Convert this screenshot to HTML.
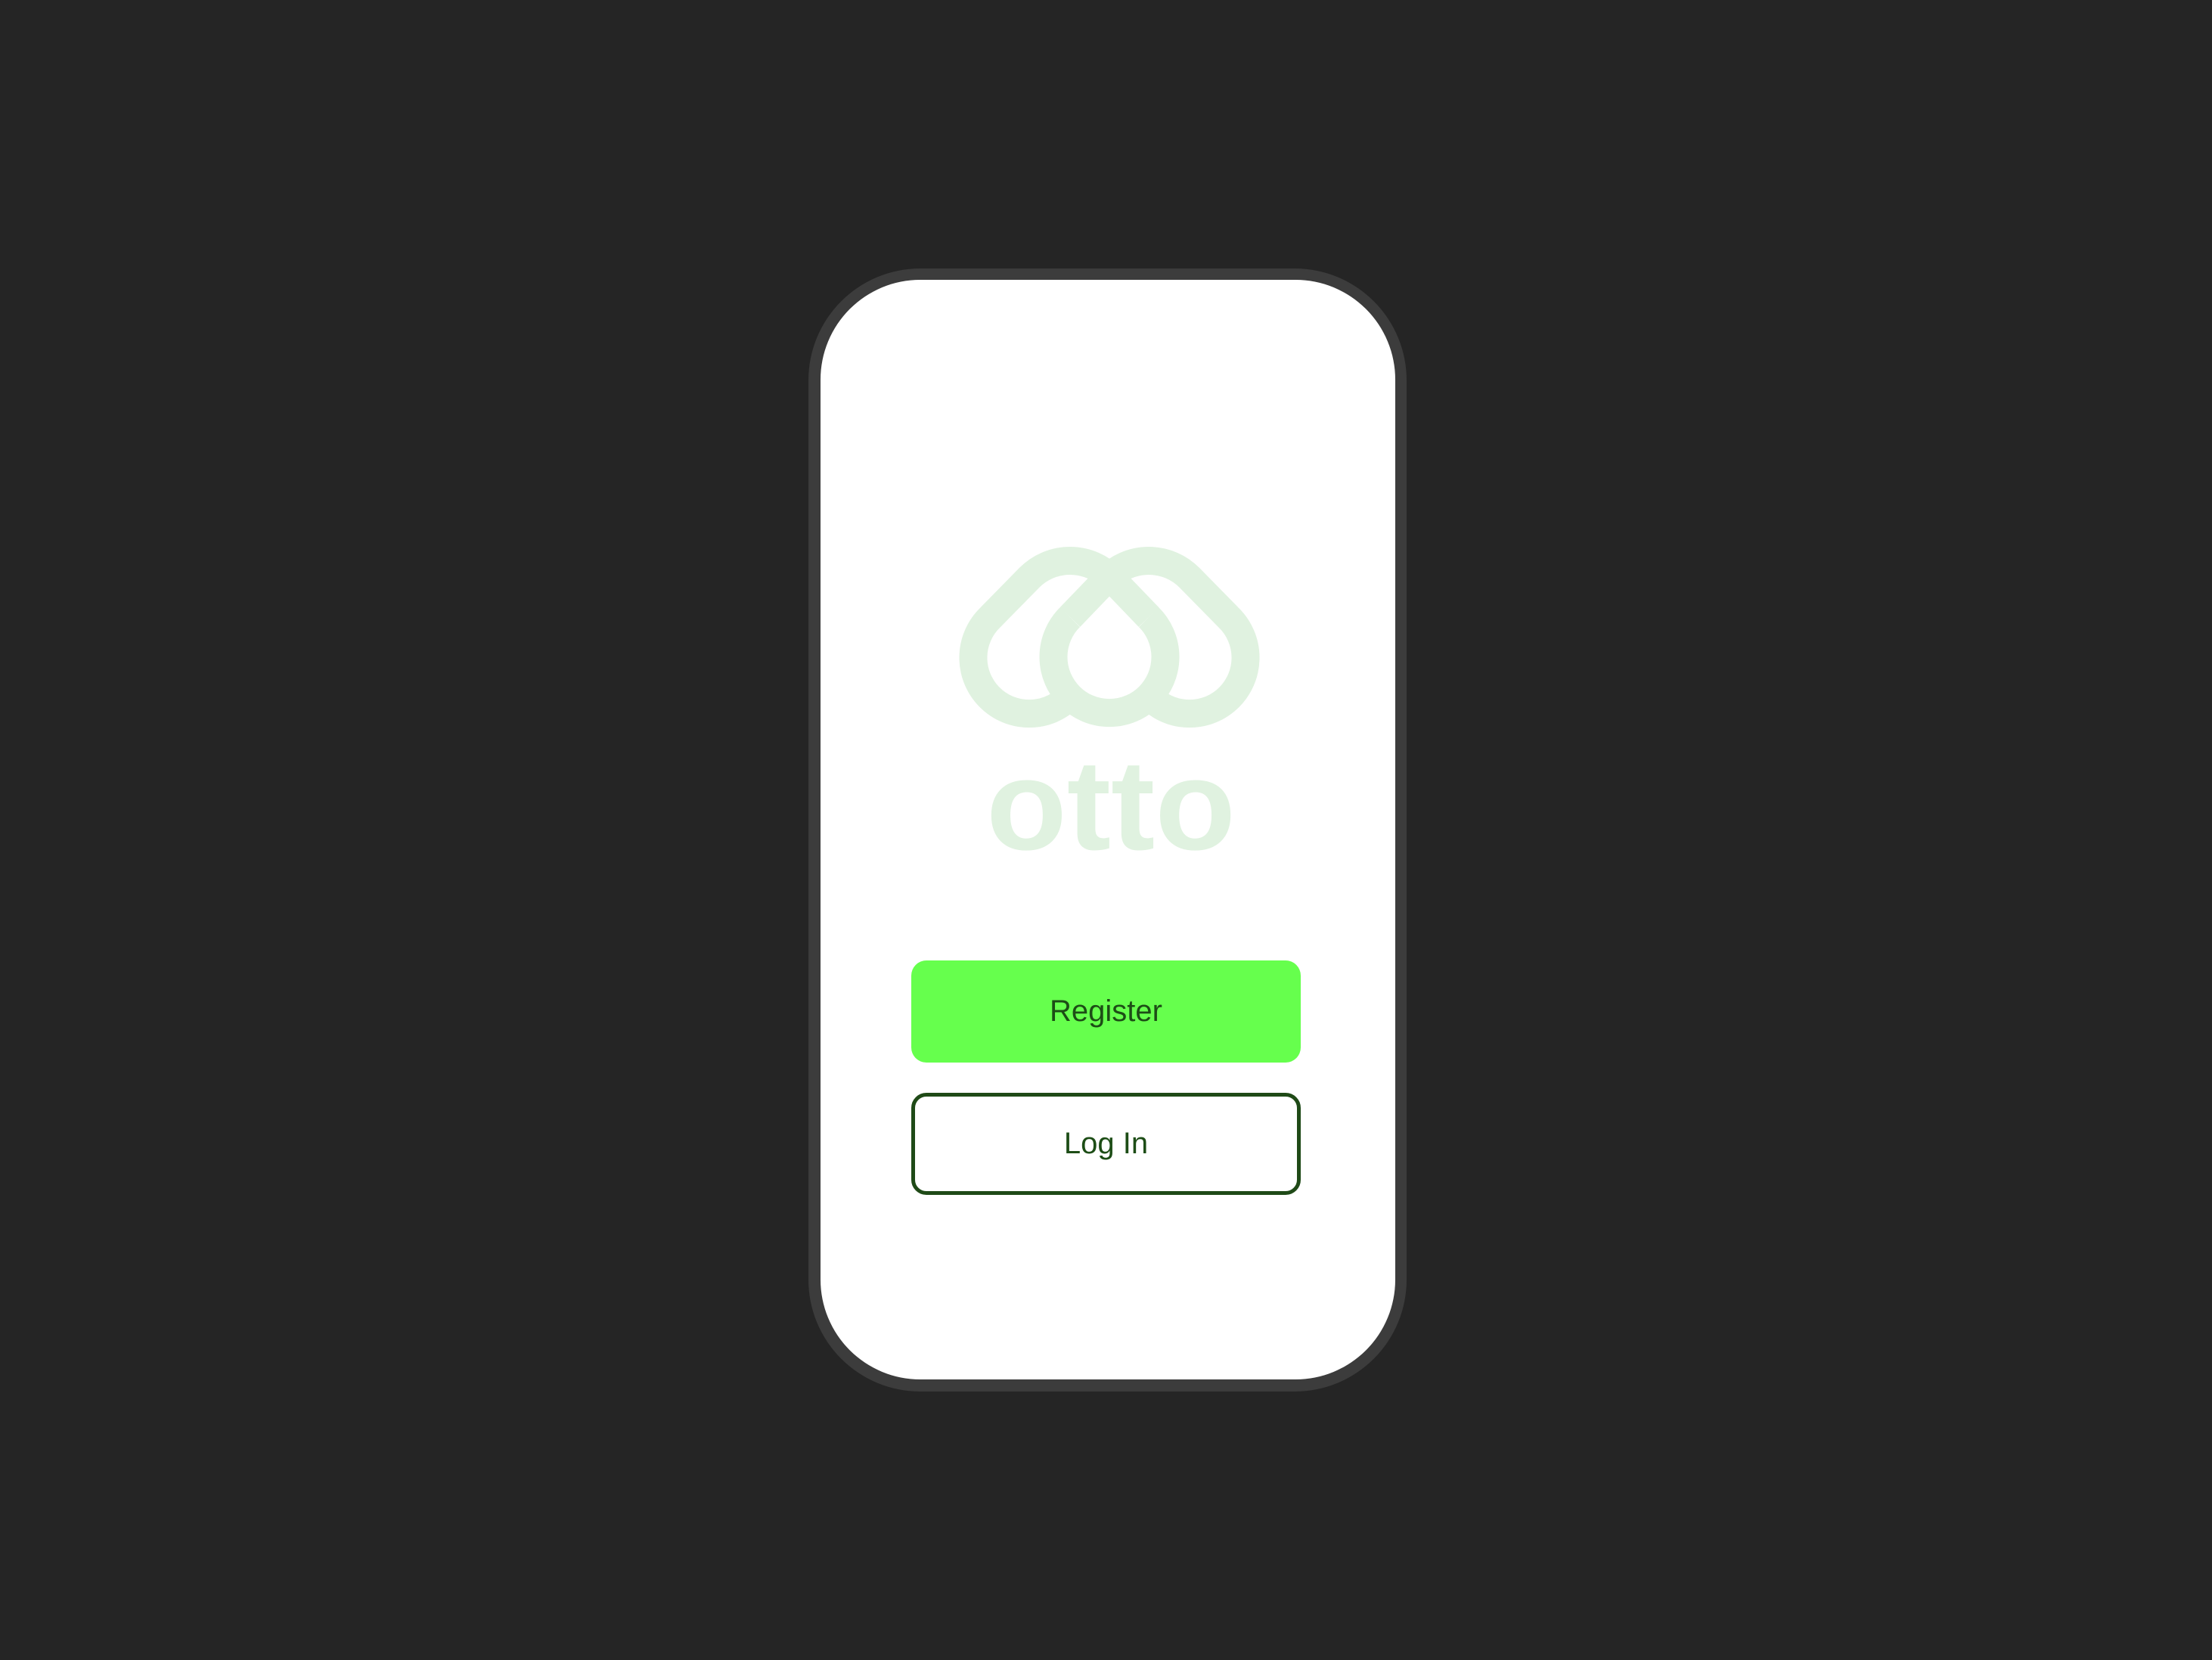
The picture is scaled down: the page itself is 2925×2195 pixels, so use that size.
<!DOCTYPE html>
<html><head><meta charset="utf-8"><style>
html,body{margin:0;padding:0;}
body{width:2925px;height:2195px;background:#252525;position:relative;overflow:hidden;font-family:"Liberation Sans",sans-serif;}
.frame{position:absolute;left:1069px;top:355px;width:791px;height:1485px;background:#3c3c3c;border-radius:148px;}
.screen{position:absolute;left:1085px;top:370px;width:760px;height:1454px;background:#fff;border-radius:132px;}
.btn{position:absolute;left:1205px;width:515px;box-sizing:border-box;display:flex;align-items:center;justify-content:center;font-size:40px;color:#1d4d16;}
.reg{top:1270px;height:135px;background:#66ff4d;border-radius:20px;}
.log{top:1445px;height:135px;border:5px solid #1f4a17;border-radius:20px;background:#fff;}
svg{position:absolute;left:0;top:0;}
</style></head><body>
<div class="frame"></div>
<div class="screen"></div>
<svg width="2925" height="2195" viewBox="0 0 2925 2195">
<g fill="none" stroke="#e0f2e0" stroke-width="37">
<path d="M1423,910 A74 74 0 1 1 1310,816 L1361,764 A76 76 0 0 1 1469,764 L1519,816"/>
<path d="M1511,910 A74 74 0 1 0 1624,816 L1573,764 A76 76 0 0 0 1465,764 L1415,816"/>
<path d="M1519,816 A74 74 0 1 1 1415,816"/>
</g>
<text x="1304" y="1123" font-family="Liberation Sans, sans-serif" font-weight="bold" font-size="170" fill="#e0f2e0" textLength="330" lengthAdjust="spacingAndGlyphs">otto</text>
</svg>
<div class="btn reg">Register</div>
<div class="btn log">Log In</div>
</body></html>
